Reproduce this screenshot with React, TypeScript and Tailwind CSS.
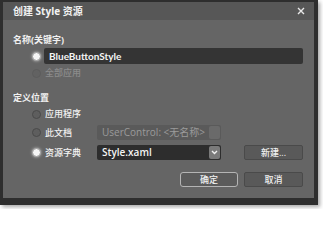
import React from 'react'

const cjk = { fontFamily: '"Open Sans", "Noto Sans CJK SC", sans-serif' }
const lato = { fontFamily: 'Lato, "Noto Sans CJK SC", sans-serif' }

function Radio({ checked, disabled }: { checked?: boolean; disabled?: boolean }) {
  if (checked) {
    return (
      <span className="w-[9px] h-[9px] rounded-full bg-[#f6f6f6] border border-[#9a9a9a] shrink-0 shadow-[0_0_3px_rgba(255,255,255,0.6)]" />
    )
  }
  return (
    <span
      className={`w-[9px] h-[9px] rounded-full shrink-0 border ${
        disabled ? 'border-[#5c5c5c] bg-[#626262]' : 'border-[#4a4a4a] bg-[#5e5e5e]'
      }`}
    />
  )
}

function Chevron() {
  return (
    <svg width="7" height="5" viewBox="0 0 7 5">
      <path d="M1 1 L3.5 3.5 L6 1" stroke="#f0f0f0" strokeWidth="1.4" fill="none" />
    </svg>
  )
}

export default function App() {
  return (
    <div className="w-[323px] h-[209px] bg-white" style={cjk}>
      <div className="w-[318px] h-[205px] bg-[#2e2e2e] pl-[3px] pr-[4px] pt-[2px] pb-[7px] shadow-[2px_2px_4px_rgba(0,0,0,0.35)]">
        <div className="h-full bg-[#656565] flex flex-col">
          {/* title bar */}
          <div className="h-[18px] bg-[#575757] flex items-center justify-between pl-[10px] pr-[9px]">
            <span className="text-[10px] font-bold text-[#f2f2f2] leading-none">创建 Style 资源</span>
            <svg width="8" height="8" viewBox="0 0 8 8">
              <path d="M1 1 L7 7 M7 1 L1 7" stroke="#e8e8e8" strokeWidth="1.4" />
            </svg>
          </div>

          <div className="flex flex-col pl-[10px] pr-[11px]">
            <div className="mt-[13px] h-[14px] flex items-center text-[9px] font-bold text-[#f0f0f0]">名称(关键字)</div>

            <div className="mt-[1px] h-[16px] flex items-center">
              <div className="w-[19px]" />
              <Radio checked />
              <div
                className="ml-[3px] flex-1 h-[16px] bg-[#343434] rounded-[2px] flex items-center pl-[5px] text-[10px] font-bold text-[#f4f4f4]"
                style={lato}
              >
                BlueButtonStyle
              </div>
            </div>

            <div className="mt-[2px] h-[14px] flex items-center">
              <div className="w-[19px]" />
              <Radio disabled />
              <span className="ml-[4px] text-[9px] font-medium text-[#8c8c8c]">全部应用</span>
            </div>

            <div className="mt-[11px] h-[14px] flex items-center text-[9px] font-bold text-[#f0f0f0]">定义位置</div>

            <div className="mt-[2px] h-[14px] flex items-center">
              <div className="w-[19px]" />
              <Radio />
              <span className="ml-[4px] text-[9px] font-medium text-[#f0f0f0]">应用程序</span>
            </div>

            <div className="mt-[4px] h-[15px] flex items-center">
              <div className="w-[19px]" />
              <Radio />
              <span className="ml-[4px] w-[52px] text-[9px] font-medium text-[#f0f0f0]">此文档</span>
              <div className="w-[124px] h-[15px] bg-[#5a5a5a] rounded-[2px] flex items-center justify-between pl-[5px] pr-[1px]">
                <span className="text-[10px] text-[#9a9a9a]">UserControl: &lt;无名称&gt;</span>
                <span className="w-[11px] h-[13px] bg-[#6a6a6a] rounded-[2px]" />
              </div>
            </div>

            <div className="mt-[5px] h-[15px] flex items-center">
              <div className="w-[19px]" />
              <Radio checked />
              <span className="ml-[4px] w-[52px] text-[9px] font-medium text-[#f4f4f4]">资源字典</span>
              <div className="w-[124px] h-[15px] bg-[#2d2d2d] rounded-[2px] flex items-center justify-between pl-[5px] pr-[1px]">
                <span className="text-[10px] font-semibold text-[#f4f4f4]">Style.xaml</span>
                <span className="w-[11px] h-[13px] bg-[#7a7a7a] rounded-[2px] flex items-center justify-center">
                  <Chevron />
                </span>
              </div>
              <div className="flex-1" />
              <button className="w-[59px] h-[15px] bg-[#595959] border border-[#4a4a4a] rounded-[2px] text-[9px] font-medium text-[#f0f0f0] leading-none">
                新建...
              </button>
            </div>

            <div className="mt-[12px] h-[15px] flex justify-end gap-[6px]">
              <button className="w-[58px] h-[15px] bg-[#5b5b5b] border border-[#b4b4b4] rounded-[3px] text-[9px] font-medium text-[#f0f0f0] leading-none">
                确定
              </button>
              <button className="w-[59px] h-[15px] bg-[#595959] border border-[#4a4a4a] rounded-[2px] text-[9px] font-medium text-[#f0f0f0] leading-none">
                取消
              </button>
            </div>
          </div>
        </div>
      </div>
    </div>
  )
}
